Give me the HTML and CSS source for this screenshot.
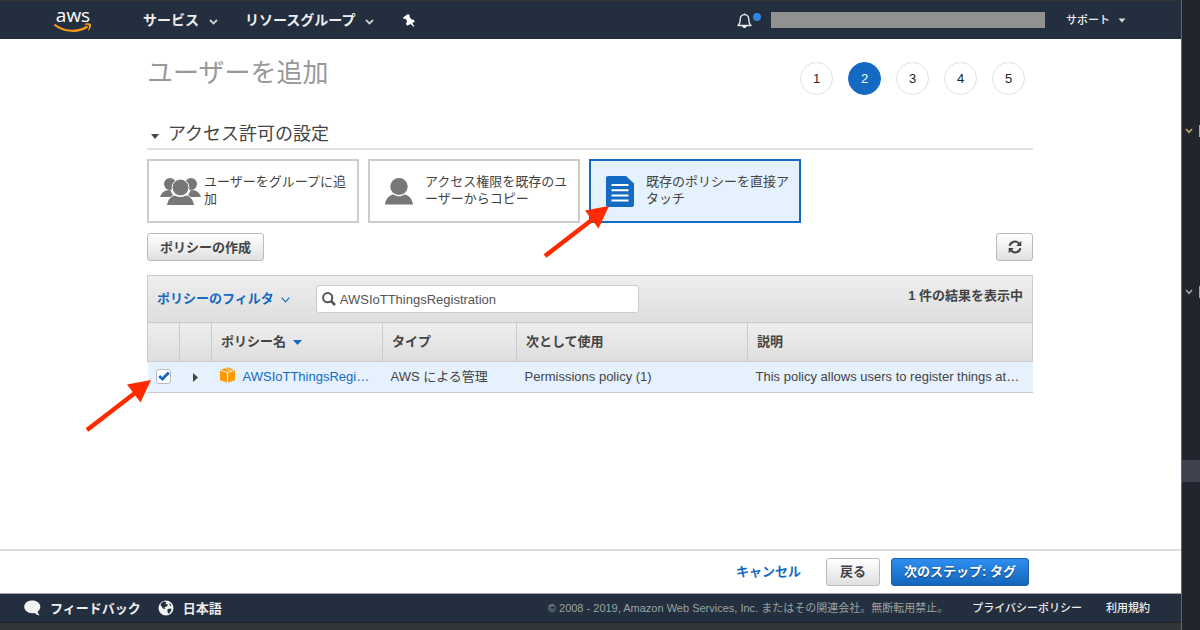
FILE: index.html
```html
<!DOCTYPE html>
<html lang="ja">
<head>
<meta charset="utf-8">
<title>IAM - ユーザーを追加</title>
<link rel="stylesheet" href="styles.css">
</head>
<body>
<div class="desktop">
  <div class="browser">
    <header class="topnav">
      <a class="logo" href="#" aria-label="aws">
        <span class="logo-text">aws</span>
        <svg class="logo-smile" width="38" height="10" viewBox="0 0 38 10"><path d="M0.5 1.5C10 9.500 25 9.500 33.500 3.500" fill="none" stroke="#f79a1c" stroke-width="2.200"/><path d="M29.500 1.600C32 0 35.500 0 37 1C37.500 3.500 36 6.500 34 8C34.500 5.500 35.300 3.500 34.800 2.600C34 1.800 32 1.700 29.500 1.600Z" fill="#f79a1c"/></svg>
      </a>
      <button class="nav-item" type="button">サービス
        <svg width="9" height="6" viewBox="0 0 9 6"><path d="M1 1L4.500 4.500L8 1" fill="none" stroke="#ccc" stroke-width="1.800"/></svg>
      </button>
      <button class="nav-item nav-groups" type="button">リソースグループ
        <svg width="9" height="6" viewBox="0 0 9 6"><path d="M1 1L4.500 4.500L8 1" fill="none" stroke="#ccc" stroke-width="1.800"/></svg>
      </button>
      <button class="nav-pin" type="button" aria-label="ピン留め">
        <svg width="12" height="13" viewBox="0 0 12 13"><path d="M0 3.500L5 0L6.800 1.600L6.500 3L8.600 5.600L10.800 5.800L11.800 7.800L9.200 9L11.400 12.200L10.600 12.700L7.600 9.900L4.200 11.800L2.800 9.800L4.100 8L3 5L1 5Z" fill="#fff"/></svg>
      </button>
      <div class="nav-right">
        <button class="bell" type="button" aria-label="通知">
          <svg width="15" height="17" viewBox="0 0 15 17"><path d="M7.500 1.500V2.500M1 13.500C3.500 11.500 3 9.500 3.300 6.500C3.600 4 5.500 2.600 7.500 2.600S11.400 4 11.700 6.500C12 9.500 11.500 11.500 14 13.500Z" fill="none" stroke="#e8e8e8" stroke-width="1.400" stroke-linejoin="round"/><path d="M5.300 14H9.700C9.500 16.600 5.500 16.600 5.300 14Z" fill="#fff"/></svg>
          <span class="bell-dot"></span>
        </button>
        <div class="account"></div>
        <button class="support" type="button">サポート
          <svg width="8" height="5" viewBox="0 0 8 5"><path d="M0.500 0.500H7.500L4 4.500Z" fill="#ddd"/></svg>
        </button>
      </div>
    </header>

    <main class="content">
      <div class="title-row">
        <h1>ユーザーを追加</h1>
        <ol class="steps">
          <li>1</li>
          <li class="current" aria-current="step">2</li>
          <li>3</li>
          <li>4</li>
          <li>5</li>
        </ol>
      </div>

      <h2>
        <svg width="8" height="5" viewBox="0 0 8 5"><path d="M0 0H8L4 5Z" fill="#444"/></svg>
        アクセス許可の設定
      </h2>

      <div class="cards">
        <button class="card group" type="button">
          <svg width="41" height="29" viewBox="0 0 41 29" fill="#777"><circle cx="10" cy="7" r="6"/><path d="M0 20C1.500 15.500 4.500 13 10 13L14 20Z"/><circle cx="31" cy="7" r="6"/><path d="M41 20C39.500 15.500 36.500 13 31 13L27 20Z"/><g stroke="#fff" stroke-width="1"><circle cx="20.500" cy="10.500" r="8.400"/><path d="M6.500 28.500C7.500 21 12 18.600 15 18C18 20 23 20 26 18C29 18.600 33.500 21 34.500 28.500Z"/></g></svg>
          <span>ユーザーをグループに追加</span>
        </button>
        <button class="card copy" type="button">
          <svg width="28" height="27" viewBox="0 0 28 27" fill="#777"><ellipse cx="14" cy="8.500" rx="8.700" ry="8.500"/><path d="M0 26.500C1 19 5.500 17 8.500 16.400C12 18.800 16 18.800 19.500 16.400C22.500 17 27 19 28 26.500Z"/></svg>
          <span>アクセス権限を既存のユーザーからコピー</span>
        </button>
        <button class="card attach selected" type="button">
          <svg width="28" height="31" viewBox="0 0 28 31"><path d="M2 0H20L28 7.500V29Q28 31 26 31H2Q0 31 0 29V2Q0 0 2 0Z" fill="#146ac2"/><path d="M5.500 9H22.500M5.500 14.200H22.500M5.500 19.400H22.500M5.500 24.600H22.500" stroke="#fff" stroke-width="2"/></svg>
          <span>既存のポリシーを直接アタッチ</span>
          <svg class="arrow arrow-card" width="68" height="54" viewBox="0 0 68 54"><path d="M2 51L50 14" stroke="#ff2a00" stroke-width="4.500"/><path d="M66 1L42 5.500L55.500 23.500Z" fill="#ff2a00"/></svg>
        </button>
      </div>

      <div class="toolbar">
        <button class="btn" type="button">ポリシーの作成</button>
        <button class="btn refresh" type="button" aria-label="更新">
          <svg width="14" height="14" viewBox="0 0 14 14"><path d="M1.600 5.800C2.500 1.500 8.500 0 11.200 3.800M12.400 8.200C11.500 12.500 5.500 14 2.800 10.200" fill="none" stroke="#444" stroke-width="2"/><path d="M13.300 0.800V6H8.200ZM0.700 13.200V8H5.800Z" fill="#444"/></svg>
        </button>
      </div>

      <section class="policies">
        <div class="filter-bar">
          <button class="filter" type="button">ポリシーのフィルタ
            <svg width="9" height="6" viewBox="0 0 9 6"><path d="M0.700 0.700L4.500 4.800L8.300 0.700" fill="none" stroke="#146ac2" stroke-width="1.200"/></svg>
          </button>
          <label class="search">
            <svg width="14" height="14" viewBox="0 0 14 14"><circle cx="5.700" cy="5.700" r="4.600" fill="none" stroke="#555" stroke-width="2"/><path d="M9 9L13 13" stroke="#555" stroke-width="2.500"/></svg>
            <input type="text" value="AWSIoTThingsRegistration" aria-label="検索">
          </label>
          <span class="count">1 件の結果を表示中</span>
        </div>
        <table>
          <colgroup>
            <col class="c-check"><col class="c-expand"><col class="c-name"><col class="c-type"><col class="c-used"><col>
          </colgroup>
          <thead>
            <tr>
              <th></th>
              <th></th>
              <th>ポリシー名 <svg class="sort" width="9" height="5" viewBox="0 0 9 5"><path d="M0 0H9L4.500 5Z" fill="#146ac2"/></svg></th>
              <th>タイプ</th>
              <th>次として使用</th>
              <th>説明</th>
            </tr>
          </thead>
          <tbody>
            <tr>
              <td class="check">
                <input type="checkbox" checked aria-label="AWSIoTThingsRegistration">
                <svg class="tick" width="12" height="10" viewBox="0 0 12 10"><path d="M1.200 5L4.500 8L10.800 1.500" fill="none" stroke="#146ac2" stroke-width="2.800"/></svg>
                <svg class="arrow arrow-row" width="68" height="54" viewBox="0 0 68 54"><path d="M2 51L50 14" stroke="#ff2a00" stroke-width="4.500"/><path d="M66 1L42 5.500L55.500 23.500Z" fill="#ff2a00"/></svg>
              </td>
              <td class="expand"><svg width="5" height="9" viewBox="0 0 5 9"><path d="M0 0L5 4.500L0 9Z" fill="#444"/></svg></td>
              <td>
                <div class="name">
                  <svg width="15" height="16" viewBox="0 0 15 16"><path d="M0 3.600L6.900 5.800V15.600L0 13.200ZM15 3.600L8.100 5.800V15.600L15 13.200ZM0.800 2.700L4.800 1.300L10.500 4L7.500 5ZM5.900 1L7.500 0.300L14.200 2.700L11.600 3.600Z" fill="#f90"/></svg>
                  <a href="#">AWSIoTThingsRegi…</a>
                </div>
              </td>
              <td>AWS による管理</td>
              <td>Permissions policy (1)</td>
              <td>This policy allows users to register things at…</td>
            </tr>
          </tbody>
        </table>
      </section>
    </main>

    <div class="actions">
      <a href="#">キャンセル</a>
      <button class="btn back" type="button">戻る</button>
      <button class="btn primary" type="button">次のステップ: タグ</button>
    </div>

    <footer class="footer">
      <a class="feedback" href="#">
        <svg width="17" height="16" viewBox="0 0 17 16"><path d="M8.200 0.500C12.800 0.500 16.300 3.200 16.300 6.800C16.300 8.800 15.300 10.600 13.700 11.700C13.800 13.200 14.700 14.300 15.800 15.200C13.500 15.300 11.600 14.300 10.500 13C9.800 13.200 9 13.200 8.200 13.200C3.700 13.200 0.200 10.400 0.200 6.800S3.700 0.500 8.200 0.500Z" fill="#f4f4f4"/></svg>
        フィードバック
      </a>
      <button class="language" type="button">
        <svg width="16" height="16" viewBox="0 0 16 16"><circle cx="8" cy="8" r="7.500" fill="#f4f4f4"/><path d="M5.500 1.500L8.500 2L7.500 4L10 4.500L9 6.500L6.500 7L7.500 9L5 8.500L2.500 5L3 3.500ZM11 3L13.500 5L12 6ZM9.500 9L13 8.500L13.500 10L11 14L9.500 12Z" fill="#232f3e"/></svg>
        日本語
      </button>
      <span class="copyright">© 2008 - 2019, Amazon Web Services, Inc. またはその関連会社。無断転用禁止。</span>
      <a class="legal" href="#">プライバシーポリシー</a>
      <a class="legal" href="#">利用規約</a>
    </footer>
  </div>
  <aside class="editor">
    <div class="node tan"><svg width="8" height="6" viewBox="0 0 8 6"><path d="M1 1L4 4.300L7 1" fill="none" stroke="currentColor" stroke-width="1.600"/></svg><i></i></div>
    <div class="node grey"><svg width="8" height="6" viewBox="0 0 8 6"><path d="M1 1L4 4.300L7 1" fill="none" stroke="currentColor" stroke-width="1.600"/></svg><i></i></div>
    <div class="active-line"></div>
  </aside>
  <div class="dock"></div>
</div>
</body>
</html>
```
FILE: styles.css
```css
* { box-sizing: border-box; }

body {
  margin: 0;
  color: #444;
  font: 13px/17px "Liberation Sans", "Noto Sans CJK JP", sans-serif;
}

button {
  margin: 0;
  padding: 0;
  border: 0;
  background: none;
  color: inherit;
  font: inherit;
}

a { color: #146ac2; text-decoration: none; }
svg { flex: none; }

.desktop {
  display: grid;
  grid-template: 1fr 8px / 1fr 19px;
  min-height: 100vh;
}

.browser {
  display: flex;
  flex-direction: column;
  min-width: 0;
  background: #fff;
}

/* Top navigation */
.topnav {
  display: flex;
  align-items: center;
  height: 39px;
  padding: 0 55px 0 54px;
  border-top: 1px solid #333;
  background: #232f3e;
  color: #fff;
}

.logo {
  display: flex;
  flex-direction: column;
  align-items: center;
  width: 38px;
  margin-right: 51px;
  color: #fff;
}

.logo-text {
  height: 15px;
  font: 500 19px/14px "Open Sans", sans-serif;
}

.nav-item {
  display: flex;
  align-items: center;
  gap: 10px;
  color: #eee;
  font-size: 14px;
  font-weight: bold;
}

.nav-groups { margin-left: 27px; }
.nav-item svg { margin-top: 3px; }
.nav-pin { display: flex; margin-left: 29px; }

.nav-right {
  display: flex;
  align-items: center;
  margin-left: auto;
}

.bell { position: relative; display: flex; margin-right: 19px; }

.bell-dot {
  position: absolute;
  top: 1px;
  right: -9px;
  width: 8px;
  height: 8px;
  border-radius: 50%;
  background: #2e86de;
}

.account { width: 274px; height: 16px; background: #919191; }

.support {
  display: flex;
  align-items: center;
  gap: 8px;
  margin-left: 21px;
  color: #eee;
  font-size: 11px;
  font-weight: 500;
}

/* Page content */
.content { flex: 1; padding: 0 148px 0 147px; }

.title-row {
  display: flex;
  justify-content: space-between;
  align-items: flex-start;
  padding-right: 8px;
}

h1 {
  margin: 17px 0 0;
  color: #999;
  font-size: 26px;
  font-weight: normal;
  line-height: 34px;
}

.steps {
  display: flex;
  gap: 15px;
  margin: 23px 0 0;
  padding: 0;
  list-style: none;
}

.steps li {
  width: 33px;
  height: 33px;
  border: 1px solid #e2e2e2;
  border-radius: 50%;
  color: #222;
  line-height: 31px;
  text-align: center;
}

.steps .current { border-color: #146ac2; background: #146ac2; color: #fff; }

h2 {
  display: flex;
  align-items: center;
  gap: 9px;
  margin: 25px 0 9px;
  padding: 0 0 0 4px;
  border-bottom: 2px solid #e2e2e2;
  font-size: 18px;
  font-weight: normal;
  line-height: 28px;
}

h2 svg { margin-top: 4px; }

.cards { display: flex; gap: 9px; }

.card {
  position: relative;
  display: flex;
  align-items: center;
  width: 212px;
  height: 64px;
  border: 2px solid #ccc;
  background: #fff;
  text-align: left;
}

.card.group { gap: 3px; padding: 0 10px 0 11px; }
.card.copy { gap: 12px; padding: 0 10px 0 15px; }
.card.attach { gap: 12px; padding: 0 10px 0 15px; }
.card span { padding-bottom: 2px; }
.card.selected { border-color: #146ac2; background: #e5f1fd; }

.arrow { position: absolute; pointer-events: none; }
.arrow-card { left: -48px; top: 44px; }
.arrow-row { left: -63px; top: 17px; }

.toolbar { display: flex; justify-content: space-between; margin: 10px 0 14px; }

.btn {
  height: 28px;
  padding: 0 12px;
  border: 1px solid #bbb;
  border-radius: 3px;
  background: linear-gradient(#fff, #e0e0e0);
  color: #444;
  font-weight: bold;
}

.refresh { display: flex; align-items: center; justify-content: center; width: 37px; padding: 0; }

/* Policy list */
.filter-bar {
  display: flex;
  align-items: center;
  height: 47px;
  padding: 0 9px;
  border: 1px solid #ccc;
  border-bottom: 0;
  background: linear-gradient(#eee, #dedede);
}

.filter {
  display: flex;
  align-items: center;
  gap: 7px;
  padding-bottom: 2px;
  color: #146ac2;
  font-weight: bold;
}

.filter svg { margin-top: 3px; }

.search {
  display: flex;
  align-items: center;
  gap: 4px;
  width: 323px;
  height: 28px;
  margin-left: 26px;
  padding: 0 5px;
  border: 1px solid #ccc;
  border-radius: 3px;
  background: #fff;
}

.search input {
  flex: 1;
  min-width: 0;
  padding: 0;
  border: 0;
  outline: 0;
  background: none;
  color: #555;
  font: inherit;
}

.count { margin: 0 0 8px auto; font-weight: bold; }

table { width: 100%; border-collapse: collapse; table-layout: fixed; }
.c-check, .c-expand { width: 32px; }
.c-name { width: 171px; }
.c-type { width: 134px; }
.c-used { width: 231px; }

th {
  height: 39px;
  padding: 0 9px 1px;
  border: 1px solid #ccc;
  background: linear-gradient(#eee, #dedede);
  text-align: left;
}

.sort { margin-left: 3px; vertical-align: 1px; }

td {
  height: 31px;
  padding: 0 8px 1px;
  border-bottom: 1px solid #ccc;
  background: #e5f1fd;
  white-space: nowrap;
}

td.check { position: relative; padding: 0 0 2px; }

.check input {
  display: block;
  width: 15px;
  height: 15px;
  margin: 0 auto;
  border: 1px solid #bbb;
  border-radius: 3px;
  appearance: none;
  background: #fff;
}

.tick { position: absolute; top: 9px; left: 10px; pointer-events: none; }
td.expand { padding: 0; text-align: center; }

.name { display: flex; align-items: center; gap: 8px; }
.name svg { margin-bottom: 4px; }

/* Wizard actions */
.actions {
  display: flex;
  align-items: center;
  justify-content: flex-end;
  height: 45px;
  padding: 0 152px 1px 0;
  border-top: 2px solid #ddd;
  border-bottom: 1px solid #aaa;
  font-weight: bold;
}

.back { width: 54px; margin: 0 11px 0 25px; }

.primary {
  border-color: #1a5fa8;
  background: linear-gradient(#2e8eef, #1465bb);
  color: #fff;
  text-shadow: 0 1px 1px #0d3c70;
}

/* Footer */
.footer {
  display: flex;
  align-items: center;
  height: 28px;
  padding: 0 31px 0 24px;
  background: #232f3e;
  color: #eee;
  font-size: 11px;
}

.feedback, .language {
  display: flex;
  align-items: center;
  gap: 9px;
  color: #eee;
  font-size: 13px;
  font-weight: bold;
}

.language { margin-left: 17px; }
.copyright { margin-left: auto; color: #99a3a3; }
.legal { margin-left: 24px; color: #eee; font-weight: 500; }

/* Editor window and dock behind the browser */
.editor {
  grid-row: 1 / 3;
  grid-column: 2;
  padding-top: 125px;
  border-left: 1px solid #666;
  background: #21252d;
}

.node { display: flex; align-items: center; justify-content: space-between; height: 12px; padding-left: 3px; }
.node i { width: 1px; height: 12px; background: currentColor; }
.tan { margin-bottom: 149px; color: #c8a56a; }
.grey { margin-bottom: 162px; color: #a0a6b1; }
.active-line { height: 22px; background: #3d424e; }

.dock { grid-row: 2; border-top: 1px solid #252525; background: #333638; }
```
